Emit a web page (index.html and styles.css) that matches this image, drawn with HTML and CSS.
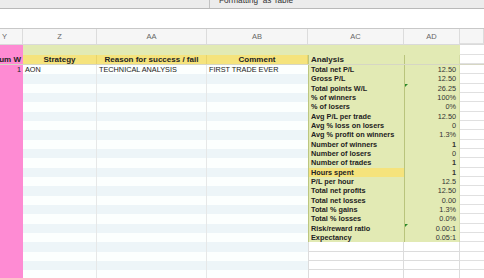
FILE: index.html
```html
<!DOCTYPE html>
<html><head>
<title>Trade Log</title>
<link rel="stylesheet" href="styles.css">
</head><body>

<div class="toolbar"><span class="sep"></span><span class="label">Formatting &nbsp;as Table</span></div>
<div class="formula-bar"></div>

<div class="sheet">
  <div class="row col-heads">
    <div class="cell y">Y</div>
    <div class="cell">Z</div>
    <div class="cell">AA</div>
    <div class="cell">AB</div>
    <div class="cell">AC</div>
    <div class="cell">AD</div>
    <div class="cell rest"></div>
  </div>

  <div class="row band">
    <div class="cell y"></div>
    <div class="cell green"></div>
    <div class="cell green"></div>
    <div class="cell green"></div>
    <div class="cell green"></div>
    <div class="cell green"></div>
    <div class="cell rest"></div>
  </div>

  <div class="row heads">
    <div class="cell y num">Num W</div>
    <div class="cell yellow">Strategy</div>
    <div class="cell yellow">Reason for success / fail</div>
    <div class="cell yellow">Comment</div>
    <div class="cell ac green label">Analysis</div>
    <div class="cell ad green"></div>
    <div class="cell rest"></div>
  </div>

  <div class="row data">
    <div class="cell y num">1</div>
    <div class="cell stripe z">AON</div>
    <div class="cell stripe aa">TECHNICAL ANALYSIS</div>
    <div class="cell stripe ab">FIRST TRADE EVER</div>
    <div class="cell ac green">Total net P/L</div>
    <div class="cell ad green">12.50</div>
    <div class="cell rest"></div>
  </div>
  <div class="row data">
    <div class="cell y"></div>
    <div class="cell stripe z"></div>
    <div class="cell stripe aa"></div>
    <div class="cell stripe ab"></div>
    <div class="cell ac green">Gross P/L</div>
    <div class="cell ad green">12.50</div>
    <div class="cell rest"></div>
  </div>
  <div class="row data">
    <div class="cell y"></div>
    <div class="cell stripe z"></div>
    <div class="cell stripe aa"></div>
    <div class="cell stripe ab"></div>
    <div class="cell ac green">Total points W/L</div>
    <div class="cell ad green"><span class="flag"></span>26.25</div>
    <div class="cell rest"></div>
  </div>
  <div class="row data">
    <div class="cell y"></div>
    <div class="cell stripe z"></div>
    <div class="cell stripe aa"></div>
    <div class="cell stripe ab"></div>
    <div class="cell ac green">% of winners</div>
    <div class="cell ad green">100%</div>
    <div class="cell rest"></div>
  </div>
  <div class="row data">
    <div class="cell y"></div>
    <div class="cell stripe z"></div>
    <div class="cell stripe aa"></div>
    <div class="cell stripe ab"></div>
    <div class="cell ac green">% of losers</div>
    <div class="cell ad green">0%</div>
    <div class="cell rest"></div>
  </div>
  <div class="row data">
    <div class="cell y"></div>
    <div class="cell stripe z"></div>
    <div class="cell stripe aa"></div>
    <div class="cell stripe ab"></div>
    <div class="cell ac green">Avg P/L per trade</div>
    <div class="cell ad green">12.50</div>
    <div class="cell rest"></div>
  </div>
  <div class="row data">
    <div class="cell y"></div>
    <div class="cell stripe z"></div>
    <div class="cell stripe aa"></div>
    <div class="cell stripe ab"></div>
    <div class="cell ac green">Avg % loss on losers</div>
    <div class="cell ad green">0</div>
    <div class="cell rest"></div>
  </div>
  <div class="row data">
    <div class="cell y"></div>
    <div class="cell stripe z"></div>
    <div class="cell stripe aa"></div>
    <div class="cell stripe ab"></div>
    <div class="cell ac green">Avg % profit on winners</div>
    <div class="cell ad green">1.3%</div>
    <div class="cell rest"></div>
  </div>
  <div class="row data">
    <div class="cell y"></div>
    <div class="cell stripe z"></div>
    <div class="cell stripe aa"></div>
    <div class="cell stripe ab"></div>
    <div class="cell ac green">Number of winners</div>
    <div class="cell ad green bold">1</div>
    <div class="cell rest"></div>
  </div>
  <div class="row data">
    <div class="cell y"></div>
    <div class="cell stripe z"></div>
    <div class="cell stripe aa"></div>
    <div class="cell stripe ab"></div>
    <div class="cell ac green">Number of losers</div>
    <div class="cell ad green">0</div>
    <div class="cell rest"></div>
  </div>
  <div class="row data">
    <div class="cell y"></div>
    <div class="cell stripe z"></div>
    <div class="cell stripe aa"></div>
    <div class="cell stripe ab"></div>
    <div class="cell ac green">Number of trades</div>
    <div class="cell ad green bold">1</div>
    <div class="cell rest"></div>
  </div>
  <div class="row data">
    <div class="cell y"></div>
    <div class="cell stripe z"></div>
    <div class="cell stripe aa"></div>
    <div class="cell stripe ab"></div>
    <div class="cell ac green input">Hours spent</div>
    <div class="cell ad green bold">1</div>
    <div class="cell rest"></div>
  </div>
  <div class="row data">
    <div class="cell y"></div>
    <div class="cell stripe z"></div>
    <div class="cell stripe aa"></div>
    <div class="cell stripe ab"></div>
    <div class="cell ac green">P/L per hour</div>
    <div class="cell ad green">12.5</div>
    <div class="cell rest"></div>
  </div>
  <div class="row data">
    <div class="cell y"></div>
    <div class="cell stripe z"></div>
    <div class="cell stripe aa"></div>
    <div class="cell stripe ab"></div>
    <div class="cell ac green">Total net profits</div>
    <div class="cell ad green">12.50</div>
    <div class="cell rest"></div>
  </div>
  <div class="row data">
    <div class="cell y"></div>
    <div class="cell stripe z"></div>
    <div class="cell stripe aa"></div>
    <div class="cell stripe ab"></div>
    <div class="cell ac green">Total net losses</div>
    <div class="cell ad green">0.00</div>
    <div class="cell rest"></div>
  </div>
  <div class="row data">
    <div class="cell y"></div>
    <div class="cell stripe z"></div>
    <div class="cell stripe aa"></div>
    <div class="cell stripe ab"></div>
    <div class="cell ac green">Total % gains</div>
    <div class="cell ad green">1.3%</div>
    <div class="cell rest"></div>
  </div>
  <div class="row data">
    <div class="cell y"></div>
    <div class="cell stripe z"></div>
    <div class="cell stripe aa"></div>
    <div class="cell stripe ab"></div>
    <div class="cell ac green">Total % losses</div>
    <div class="cell ad green">0.0%</div>
    <div class="cell rest"></div>
  </div>
  <div class="row data">
    <div class="cell y"></div>
    <div class="cell stripe z"></div>
    <div class="cell stripe aa"></div>
    <div class="cell stripe ab"></div>
    <div class="cell ac green">Risk/reward ratio</div>
    <div class="cell ad green soft"><span class="flag"></span>0.00:1</div>
    <div class="cell rest"></div>
  </div>
  <div class="row data">
    <div class="cell y"></div>
    <div class="cell stripe z"></div>
    <div class="cell stripe aa"></div>
    <div class="cell stripe ab"></div>
    <div class="cell ac green">Expectancy</div>
    <div class="cell ad green soft">0.05:1</div>
    <div class="cell rest"></div>
  </div>
  <div class="row data">
    <div class="cell y"></div>
    <div class="cell stripe z"></div>
    <div class="cell stripe aa"></div>
    <div class="cell stripe ab"></div>
    <div class="cell ac plain"></div>
    <div class="cell ad plain"></div>
    <div class="cell rest"></div>
  </div>
  <div class="row data">
    <div class="cell y"></div>
    <div class="cell stripe z"></div>
    <div class="cell stripe aa"></div>
    <div class="cell stripe ab"></div>
    <div class="cell ac plain"></div>
    <div class="cell ad plain"></div>
    <div class="cell rest"></div>
  </div>
  <div class="row data">
    <div class="cell y"></div>
    <div class="cell stripe z"></div>
    <div class="cell stripe aa"></div>
    <div class="cell stripe ab"></div>
    <div class="cell ac plain"></div>
    <div class="cell ad plain"></div>
    <div class="cell rest"></div>
  </div>
  <div class="row data">
    <div class="cell y"></div>
    <div class="cell stripe z"></div>
    <div class="cell stripe aa"></div>
    <div class="cell stripe ab"></div>
    <div class="cell ac plain"></div>
    <div class="cell ad plain"></div>
    <div class="cell rest"></div>
  </div>
</div>

</body></html>
```

FILE: styles.css
```css
* {
  box-sizing: border-box;
  }
body {
  margin: 0;
  width: 484px;
  height: 278px;
  overflow: hidden;
  background: #fff;
  font-family: "Liberation Sans", Arial, sans-serif;
  color: #222;
  }
.toolbar {
  height: 9px;
  display: flex;
  overflow: hidden;
  background: #ececec;
  border-bottom: 1px solid #b9b9b9;
  }
.toolbar .sep {
  width: 210px;
  border-right: 1px solid #c2c2c2;
  }
.toolbar .label {
  margin: -3px 0 0 9px;
  font-size: 8.2px;
  line-height: 8px;
  color: #333;
  white-space: nowrap;
  }
.formula-bar {
  height: 20px;
  border-bottom: 1px solid #c8c8c8;
  }
.row {
  display: grid;
  grid-template-columns: 23px 74px 110px 101px 96px 56px 1fr;
  }
.cell {
  position: relative;
  overflow: hidden;
  white-space: nowrap;
  }
.y {
  background: #fe8bd3;
  }
.col-heads {
  height: 16px;
  background: #f6f6f6;
  border-bottom: 1px solid #dadada;
  font-size: 7.5px;
  line-height: 15px;
  color: #666;
  text-align: center;
  }
.col-heads .cell {
  border-right: 1px solid #dcdcdc;
  }
.col-heads .y {
  background: transparent;
  text-align: left;
  padding-left: 2px;
  }
.num {
  display: flex;
  justify-content: flex-end;
  padding-right: 2px;
  }
.green {
  background: #e2eab4;
  }
.yellow {
  background: #f5e37c;
  border-right: 1px solid #e8d36a;
  }
.rest {
  border-bottom: 1px solid #e0e0e0;
  }
.band {
  height: 10px;
  }
.heads {
  height: 10px;
  font-size: 8px;
  line-height: 10px;
  font-weight: bold;
  text-align: center;
  border-bottom: 1px solid #d6d6c4;
  }
.heads .label {
  text-align: left;
  padding-left: 2px;
  }
.data {
  height: 9.33px;
  font-size: 7.3px;
  line-height: 9.33px;
  }
.stripe {
  background: #fcfffe;
  padding-left: 2px;
  }
.data:nth-child(odd) .stripe {
  background: #edf5f8;
  }
.z, .aa {
  border-right: 1px solid #e6e8e8;
  }
.ac.green {
  border-left: 1px solid #bcc67f;
  padding-left: 2px;
  font-weight: bold;
  }
.ac.input {
  background: #f5e37c;
  }
.ad.green {
  border-left: 1px solid #b9c47c;
  border-right: 1px solid #d4dca4;
  text-align: right;
  padding-right: 3px;
  color: #333;
  }
.bold {
  font-weight: bold;
  }
.soft {
  color: #555;
  }
.flag {
  position: absolute;
  left: 0;
  top: 0;
  width: 0;
  height: 0;
  border-top: 3px solid #2a8a2a;
  border-right: 3px solid transparent;
  }
.plain {
  border-right: 1px solid #dcdcdc;
  border-bottom: 1px solid #dcdcdc;
  }
.ac.plain {
  border-left: 1px solid #dcdcdc;
  }
```
